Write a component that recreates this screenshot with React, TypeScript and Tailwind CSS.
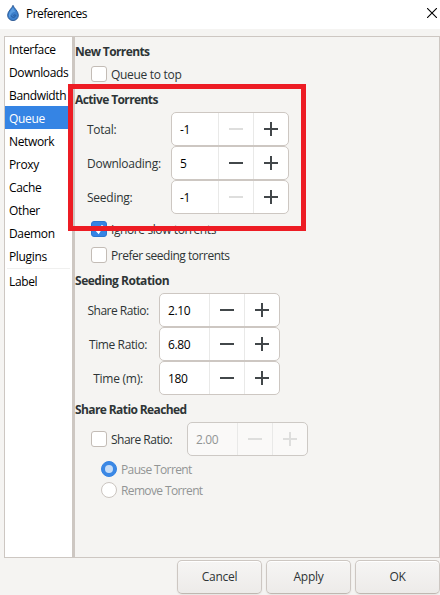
import type { ReactNode } from "react";

const categories = [
  "Interface",
  "Downloads",
  "Bandwidth",
  "Queue",
  "Network",
  "Proxy",
  "Cache",
  "Other",
  "Daemon",
  "Plugins",
];

type HeadingProps = { children: ReactNode; className?: string; tracking?: string };

function Heading({ children, className = "", tracking = "tracking-[-0.6px]" }: HeadingProps) {
  return (
    <h2 className={`flex shrink-0 items-center font-bold ${tracking} ${className}`}>
      <span className="pt-0.5">{children}</span>
    </h2>
  );
}

function Check({ checked = false }: { checked?: boolean }) {
  return (
    <span
      className={`flex size-4 shrink-0 items-center justify-center rounded-[3px] border ${
        checked ? "border-[#2a76d2] bg-[#3584e4]" : "border-[#c3bcb6] bg-white"
      }`}
    >
      {checked && (
        <svg viewBox="0 0 14 14" className="size-3.5" fill="none" stroke="white" strokeWidth="2.4">
          <path d="M3.5 7 6.5 10.300 10.800 3.500" />
        </svg>
      )}
    </span>
  );
}

type CheckRowProps = { label: string; checked?: boolean; className?: string; tracking?: string };

function CheckRow({ label, checked, className = "", tracking = "tracking-[-0.3px]" }: CheckRowProps) {
  return (
    <label className={`flex shrink-0 items-center gap-1 pl-4 ${className}`}>
      <Check checked={checked} />
      <span className={`pt-0.5 ${tracking}`}>{label}</span>
    </label>
  );
}

function Sign({ plus = false, faded = false }: { plus?: boolean; faded?: boolean }) {
  return (
    <svg viewBox="0 0 14 14" className={`size-3.5 ${faded ? "text-[#dededd]" : "text-[#42474a]"}`} fill="currentColor" shapeRendering="crispEdges">
      <rect x="0" y="6" width="14" height="2" />
      {plus && <rect x="6" y="0" width="2" height="14" />}
    </svg>
  );
}

type SpinProps = { value: string; narrow?: boolean; atMin?: boolean; disabled?: boolean };

function Spin({ value, narrow = false, atMin = false, disabled = false }: SpinProps) {
  return (
    <div
      className={`flex h-[34px] shrink-0 rounded-[5px] border ${narrow ? "w-[118px]" : "w-[121px]"} ${
        disabled ? "border-[#cdc9c5] bg-[#faf9f8] text-[#929595]" : "border-[#cdc7c2] bg-white text-black"
      }`}
    >
      <span className="flex flex-1 items-center pt-px pl-2 tracking-[-0.4px]">{value}</span>
      <span className="flex w-[35px] items-center justify-center border-l border-[#e9e9e8]">
        <Sign faded={atMin || disabled} />
      </span>
      <span className="flex w-[35px] items-center justify-center border-l border-[#e9e9e8]">
        <Sign plus faded={disabled} />
      </span>
    </div>
  );
}

function Radio({ label, selected = false, className = "" }: { label: string; selected?: boolean; className?: string }) {
  return (
    <label className={`flex shrink-0 items-center gap-1 pl-[26px] text-[#929595] ${className}`}>
      <span
        className={`flex size-4 items-center justify-center rounded-full border ${
          selected ? "border-[#3584e4] bg-[#3b88e5]" : "border-[#cbc5c0] bg-white"
        }`}
      >
        {selected && <span className="size-2 rounded-full bg-[#c6dcf7]" />}
      </span>
      <span className="pt-0.5 tracking-[-0.63px]">{label}</span>
    </label>
  );
}

function Row({ label, labelClass, children }: { label: string; labelClass: string; children: ReactNode }) {
  return (
    <div className="flex shrink-0 items-center">
      <span className={`pt-0.5 ${labelClass}`}>{label}</span>
      {children}
    </div>
  );
}

export default function App() {
  return (
    <div className="relative flex h-[595px] w-[440px] flex-col overflow-hidden bg-[#f5f4f2] font-['Open_Sans','Noto_Sans',sans-serif] text-[12px] leading-4 tracking-[-0.25px] text-[#2e3436]">
      <header className="flex h-[29px] shrink-0 items-center bg-white pr-[3px] pl-[7px] text-black">
        <svg viewBox="0 0 12 16" className="mt-[-3px] h-4 w-3">
          <path d="M6 .3C5.2 3 .6 6.2.6 10.2a5.4 5.4 0 0 0 10.8 0C11.4 6.2 6.8 3 6 .3Z" fill="#3d80cc" stroke="#1d4a88" strokeWidth=".8" />
          <path d="M6 2.5C4.5 5 2 7.2 2 10c0 1.2.5 2.3 1.3 3C3 9.500 5 7 8.200 6.800 7.500 5.200 6.500 4 6 2.500Z" fill="#5a9ce0" />
          <path d="M4.200 10.500c.5 2.500 4 2.500 4.800-.5M6 9.800c.5 1 1.800.8 2-.5" fill="none" stroke="#235596" strokeWidth=".9" />
        </svg>
        <span className="ml-[7px] flex-1 pb-px tracking-[-0.55px]">Preferences</span>
        <svg viewBox="0 0 10 10" className="mt-[-3px] size-2.5" stroke="black" strokeWidth="1.100">
          <path d="M0 0 10 10M10 0 0 10" />
        </svg>
      </header>

      <main className="mt-[7px] ml-1 flex h-[522px] shrink-0 border border-[#cdc7c2]">
        <nav className="flex w-[67px] shrink-0 flex-col bg-white tracking-[-0.35px] text-black">
          {categories.map((name) => (
            <span
              key={name}
              className={`flex h-[23px] shrink-0 items-center pt-0.5 pl-1 ${name === "Queue" ? "bg-[#3584e4] text-white" : ""}`}
            >
              {name}
            </span>
          ))}
          <hr className="mx-0.5 mt-px border-[#f0f0ef]" />
          <span className="flex h-[23px] items-center pt-0.5 pl-1">Label</span>
        </nav>
        <div className="w-[3px] shrink-0 bg-[#cdc7c2]" />

        <section className="flex min-w-0 flex-1 flex-col">
          <Heading className="h-7">New Torrents</Heading>
          <CheckRow label="Queue to top" className="h-[18px]" />
          <Heading className="h-[29px] pt-[3px]">Active Torrents</Heading>
          <Row label="Total:" labelClass="w-24 pl-3">
            <Spin value="-1" narrow atMin />
          </Row>
          <Row label="Downloading:" labelClass="w-24 pl-3">
            <Spin value="5" narrow />
          </Row>
          <Row label="Seeding:" labelClass="w-24 pl-3">
            <Spin value="-1" narrow atMin />
          </Row>
          <CheckRow label="Ignore slow torrents" checked className="h-[30px]" tracking="tracking-[-0.4px]" />
          <CheckRow label="Prefer seeding torrents" className="h-[22px]" tracking="tracking-[-0.48px]" />
          <Heading className="h-[27px]" tracking="tracking-[-0.48px]">Seeding Rotation</Heading>
          <Row label="Share Ratio:" labelClass="mr-2.5 ml-3 w-[62px] text-center tracking-[-0.5px] whitespace-nowrap">
            <Spin value="2.10" />
          </Row>
          <Row label="Time Ratio:" labelClass="mr-2.5 ml-3 w-[62px] text-center tracking-[-0.4px] whitespace-nowrap">
            <Spin value="6.80" />
          </Row>
          <Row label="Time (m):" labelClass="mr-2.5 ml-3 w-[62px] text-center whitespace-nowrap">
            <Spin value="180" />
          </Row>
          <Heading className="h-[27px]">Share Ratio Reached</Heading>
          <div className="flex shrink-0 items-center">
            <CheckRow label="Share Ratio:" className="w-28" tracking="tracking-[-0.5px]" />
            <Spin value="2.00" disabled />
          </div>
          <Radio label="Pause Torrent" selected className="mt-0.5 h-[22px]" />
          <Radio label="Remove Torrent" className="h-5" />
        </section>
      </main>

      <footer className="mt-0.5 flex h-[35px] shrink-0 justify-end gap-1">
        {["Cancel", "Apply", "OK"].map((name) => (
          <button
            key={name}
            className="flex h-[34px] w-[85px] items-center justify-center rounded-[5px] border border-[#cdc7c2] border-b-[#bfb8b1] bg-linear-to-b from-[#f6f5f4] to-[#edebe9] shadow-[inset_0_1px_white,0_1px_2px_#00000012]"
          >
            {name}
          </button>
        ))}
      </footer>

      <div className="pointer-events-none absolute top-[84px] left-[68px] h-[147px] w-[238px] border-[5px] border-[#ed1c24]" />
    </div>
  );
}
